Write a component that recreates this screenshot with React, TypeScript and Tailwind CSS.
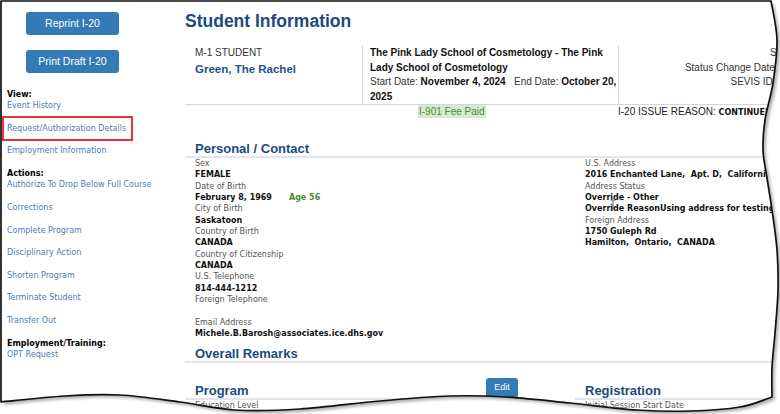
import React from "react";

type Pt = [number, number];

function cr(pts: Pt[]): string {
  let d = "";
  for (let i = 0; i < pts.length - 1; i++) {
    const p0 = pts[i - 1] || pts[i];
    const p1 = pts[i];
    const p2 = pts[i + 1];
    const p3 = pts[i + 2] || p2;
    const c1x = p1[0] + (p2[0] - p0[0]) / 6;
    const c1y = p1[1] + (p2[1] - p0[1]) / 6;
    const c2x = p2[0] - (p3[0] - p1[0]) / 6;
    const c2y = p2[1] - (p3[1] - p1[1]) / 6;
    d += ` C${c1x.toFixed(1)},${c1y.toFixed(1)} ${c2x.toFixed(1)},${c2y.toFixed(1)} ${p2[0]},${p2[1]}`;
  }
  return d;
}

const right: Pt[] = [
  [771, 1], [777, 40], [773, 83], [765, 120], [763, 150], [767, 178], [772, 210],
  [777, 250], [778, 290], [775, 333], [772, 367], [772, 397],
];
const bottom: Pt[] = [
  [772, 397], [740, 407], [690, 411], [637, 410], [570, 403], [505, 397], [450, 396],
  [380, 401], [300, 409], [235, 410], [180, 402], [120, 395], [65, 396], [1, 402],
];
const paper = `M1,1 L771,1${cr(right)}${cr(bottom)} L1,1 Z`;

function TornEdge() {
  return (
    <svg className="absolute inset-0 pointer-events-none" width="780" height="414" viewBox="0 0 780 414">
      <defs>
        <clipPath id="outside">
          <path clipRule="evenodd" d={`M-10,-10 H790 V424 H-10 Z ${paper}`} />
        </clipPath>
        <filter id="blur" x="-10%" y="-10%" width="120%" height="120%">
          <feGaussianBlur stdDeviation="1.6" />
        </filter>
      </defs>
      <path fillRule="evenodd" fill="#ffffff" d={`M-10,-10 H790 V424 H-10 Z ${paper}`} />
      <g clipPath="url(#outside)">
        <path d={paper} transform="translate(3,3)" fill="#000" opacity="0.3" filter="url(#blur)" />
      </g>
      <path d={paper} fill="none" stroke="#111" strokeWidth="1.7" strokeLinejoin="round" />
    </svg>
  );
}

function Cursor() {
  return (
    <svg className="absolute left-[609px] top-[199px] pointer-events-none" width="8" height="12" viewBox="0 0 8 12">
      <path d="M1.5,1 H3.2 L4,1.8 L4.8,1 H6.5 M4,1.8 V10.2 M1.5,11 H3.2 L4,10.2 L4.8,11 H6.5" fill="none" stroke="#555" strokeWidth="0.9" />
    </svg>
  );
}

const linkCls = "block text-[#4a7db8] mb-[11.3px]";

function Sidebar() {
  return (
    <aside className="w-[185px] shrink-0 pt-[12px]">
      <div className="flex flex-col gap-[15px] pl-[26px]">
        <button className="w-[93px] h-[23px] rounded-[3px] bg-[#337ab7] text-white text-[10.5px] font-['Liberation_Sans',sans-serif]">
          Reprint I-20
        </button>
        <button className="w-[93px] h-[23px] rounded-[3px] bg-[#337ab7] text-white text-[10.5px] font-['Liberation_Sans',sans-serif]">
          Print Draft I-20
        </button>
      </div>
      <div className="mt-[16px] pl-[7px] font-['DejaVu_Sans',sans-serif] text-[8px] leading-[11.3px] whitespace-nowrap">
        <div className="font-bold text-black">View:</div>
        <a className={linkCls}>Event History</a>
        <a className={linkCls}>Request/Authorization Details</a>
        <a className={linkCls}>Employment Information</a>
        <div className="font-bold text-black">Actions:</div>
        <a className={linkCls}>Authorize To Drop Below Full Course</a>
        <a className={linkCls}>Corrections</a>
        <a className={linkCls}>Complete Program</a>
        <a className={linkCls}>Disciplinary Action</a>
        <a className={linkCls}>Shorten Program</a>
        <a className={linkCls}>Terminate Student</a>
        <a className={linkCls}>Transfer Out</a>
        <div className="font-bold text-black">Employment/Training:</div>
        <a className={linkCls}>OPT Request</a>
      </div>
    </aside>
  );
}

function L({ children }: { children?: React.ReactNode }) {
  return <div className="text-[#555]">{children}</div>;
}
function B({ children }: { children?: React.ReactNode }) {
  return <div className="font-bold text-[#111] h-[11.35px]">{children}</div>;
}

const h2Cls = "text-[13px] leading-[15px] font-bold text-[#1c4a7e] font-['Liberation_Sans',sans-serif]";

export default function App() {
  return (
    <div className="relative w-[780px] h-[414px] overflow-hidden bg-white">
      <div className="flex">
        <Sidebar />
        <main className="w-[780px] shrink-0 pt-[11px]">
          <h1 className="text-[17.5px] leading-[20px] font-bold text-[#1c4a7e] font-['Liberation_Sans',sans-serif]">
            Student Information
          </h1>

          <div className="mt-[15px] grid grid-cols-[177px_256px_1fr] border-b border-[#cbd8e6] font-['Liberation_Sans',sans-serif] text-[10px] leading-[14.5px] text-[#333]">
            <div className="pl-[10px] h-[58px]">
              <div>M-1 STUDENT</div>
              <div className="text-[11.5px] leading-[16px] font-bold text-[#245089]">Green, The Rachel</div>
            </div>
            <div className="border-l border-[#cfdbe7] pl-[7px] pr-[1px]">
              <div className="font-bold text-[#111]">The Pink Lady School of Cosmetology - The Pink Lady School of Cosmetology</div>
              <div>
                Start Date: <span className="font-bold text-[#111]">November 4, 2024</span>
                {"\u00a0\u00a0 "}End Date: <span className="font-bold text-[#111]">October 20, 2025</span>
              </div>
            </div>
            <div className="border-l border-[#cfdbe7] pr-[135px] text-right whitespace-nowrap">
              <div>
                Status: <span className="font-bold text-[#111]">Initial</span>
              </div>
              <div>
                Status Change Date: <span className="font-bold text-[#111]">11/04/2024</span>
              </div>
              <div>
                SEVIS ID: <span className="font-bold text-[#111]">N00345678</span>
              </div>
            </div>
          </div>

          <div className="grid grid-cols-[177px_256px_1fr] font-['Liberation_Sans',sans-serif] text-[10px] leading-[13px] text-[#222]">
            <div />
            <div className="pl-[56px]">
              <span className="inline-block bg-[#d6ebcd] text-[#4b8b3b] px-px leading-[13px]">I-901 Fee Paid</span>
            </div>
            <div className="whitespace-nowrap">
              I-20 ISSUE REASON:{" "}
              <span className="font-['DejaVu_Sans',sans-serif] font-bold text-[8px] text-[#111]">CONTINUED ATTENDANCE</span>
            </div>
          </div>

          <section className="mt-[22px]">
            <h2 className={`${h2Cls} pl-[10px] border-b-2 border-[#dfe6ee]`}>Personal / Contact</h2>
            <div className="grid grid-cols-2 font-['DejaVu_Sans',sans-serif] text-[8px] leading-[11.35px] whitespace-nowrap">
              <div className="pl-[10px]">
                <L>Sex</L>
                <B>FEMALE</B>
                <L>Date of Birth</L>
                <B>
                  February 8, 1969<span className="ml-[17px] text-[#4e8b3a]">Age 56</span>
                </B>
                <L>City of Birth</L>
                <B>Saskatoon</B>
                <L>Country of Birth</L>
                <B>CANADA</B>
                <L>Country of Citizenship</L>
                <B>CANADA</B>
                <L>U.S. Telephone</L>
                <B>814-444-1212</B>
                <L>Foreign Telephone</L>
                <B />
                <L>Email Address</L>
                <B>Michele.B.Barosh@associates.ice.dhs.gov</B>
              </div>
              <div className="pl-[10px]">
                <L>U.S. Address</L>
                <B>2016 Enchanted Lane,{"\u00a0 "}Apt. D,{"\u00a0 "}California, CA 90210</B>
                <L>Address Status</L>
                <B>Override - Other</B>
                <B>Override ReasonUsing address for testing</B>
                <L>Foreign Address</L>
                <B>1750 Guleph Rd</B>
                <B>Hamilton,{"\u00a0 "}Ontario,{"\u00a0 "}CANADA</B>
              </div>
            </div>
          </section>

          <section className="mt-[6px]">
            <h2 className={`${h2Cls} pl-[10px] border-b-2 border-[#dfe6ee]`}>Overall Remarks</h2>
          </section>

          <div className="mt-[14.5px] grid grid-cols-2 font-['DejaVu_Sans',sans-serif] text-[8px] leading-[11.35px]">
            <div className="mr-[47px]">
              <div className="flex items-end justify-between h-[22.5px] pl-[10px] pr-[10px] border-b-2 border-[#dfe6ee]">
                <h2 className={h2Cls}>Program</h2>
                <button className="w-[32px] h-[20px] rounded-[3px] bg-[#337ab7] text-white text-[9px] font-['Liberation_Sans',sans-serif]">
                  Edit
                </button>
              </div>
              <div className="pl-[10px] text-[#555]">Education Level</div>
            </div>
            <div>
              <div className="flex items-end h-[22.5px] pl-[10px] border-b-2 border-[#dfe6ee]">
                <h2 className={h2Cls}>Registration</h2>
              </div>
              <div className="pl-[10px] text-[#555]">Initial Session Start Date</div>
            </div>
          </div>
        </main>
      </div>

      <div className="absolute left-[2px] top-[116px] w-[131px] h-[25px] border-2 border-[#e8333a] pointer-events-none" />
      <Cursor />
      <TornEdge />
    </div>
  );
}
